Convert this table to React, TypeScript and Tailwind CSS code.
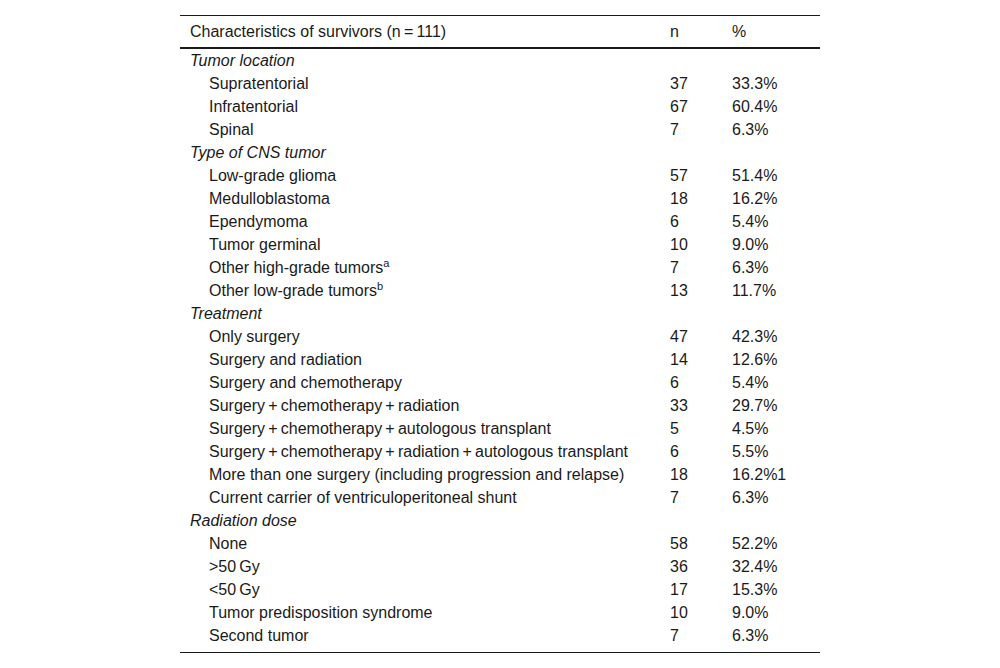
import React from 'react';

type Row = { label: React.ReactNode; n?: string; pct?: string; group?: boolean };

const rows: Row[] = [
    { label: 'Tumor location', group: true },
    { label: 'Supratentorial', n: '37', pct: '33.3%' },
    { label: 'Infratentorial', n: '67', pct: '60.4%' },
    { label: 'Spinal', n: '7', pct: '6.3%' },
    { label: 'Type of CNS tumor', group: true },
    { label: 'Low-grade glioma', n: '57', pct: '51.4%' },
    { label: 'Medulloblastoma', n: '18', pct: '16.2%' },
    { label: 'Ependymoma', n: '6', pct: '5.4%' },
    { label: 'Tumor germinal', n: '10', pct: '9.0%' },
    { label: <>Other high-grade tumors<sup className="text-[11px] relative -top-[6px]">a</sup></>, n: '7', pct: '6.3%' },
    { label: <>Other low-grade tumors<sup className="text-[11px] relative -top-[6px]">b</sup></>, n: '13', pct: '11.7%' },
    { label: 'Treatment', group: true },
    { label: 'Only surgery', n: '47', pct: '42.3%' },
    { label: 'Surgery and radiation', n: '14', pct: '12.6%' },
    { label: 'Surgery and chemotherapy', n: '6', pct: '5.4%' },
    { label: 'Surgery\u2009+\u2009chemotherapy\u2009+\u2009radiation', n: '33', pct: '29.7%' },
    { label: 'Surgery\u2009+\u2009chemotherapy\u2009+\u2009autologous transplant', n: '5', pct: '4.5%' },
    { label: 'Surgery\u2009+\u2009chemotherapy\u2009+\u2009radiation\u2009+\u2009autologous transplant', n: '6', pct: '5.5%' },
    { label: 'More than one surgery (including progression and relapse)', n: '18', pct: '16.2%1' },
    { label: 'Current carrier of ventriculoperitoneal shunt', n: '7', pct: '6.3%' },
    { label: 'Radiation dose', group: true },
    { label: 'None', n: '58', pct: '52.2%' },
    { label: '>50\u2009Gy', n: '36', pct: '32.4%' },
    { label: '<50\u2009Gy', n: '17', pct: '15.3%' },
    { label: 'Tumor predisposition syndrome', n: '10', pct: '9.0%' },
    { label: 'Second tumor', n: '7', pct: '6.3%' },
];

export default function App() {
    return (
        <div className="w-[1000px] h-[668px] bg-white font-['Liberation_Sans',Arial,sans-serif] text-[16px] leading-[18px] text-[#1a1a1a]">
            <div className="pt-[15px] w-[640px] ml-[180px]">
                <div className="border-b border-[#1a1a1a] pb-[6px]">
                    <table className="w-full border-collapse">
                        <thead>
                            <tr className="h-[32px] border-t border-[#1a1a1a] border-b-2">
                                <th className="text-left font-normal pl-[10px] pt-px">Characteristics of survivors (n{'\u2009'}={'\u2009'}111)</th>
                                <th className="text-left font-normal w-[62px] pt-px">n</th>
                                <th className="text-left font-normal w-[88px] pt-px">%</th>
                            </tr>
                        </thead>
                        <tbody>
                            {rows.map((r, i) => (
                                <tr key={i} className="h-[23px]">
                                    {r.group ? (
                                        <td colSpan={3} className="italic pl-[10px] pt-[3px]">{r.label}</td>
                                    ) : (
                                        <>
                                            <td className="pl-[29px] pt-[3px]">{r.label}</td>
                                            <td className="pt-[3px]">{r.n}</td>
                                            <td className="pt-[3px]">{r.pct}</td>
                                        </>
                                    )}
                                </tr>
                            ))}
                        </tbody>
                    </table>
                </div>
            </div>
        </div>
    );
}
